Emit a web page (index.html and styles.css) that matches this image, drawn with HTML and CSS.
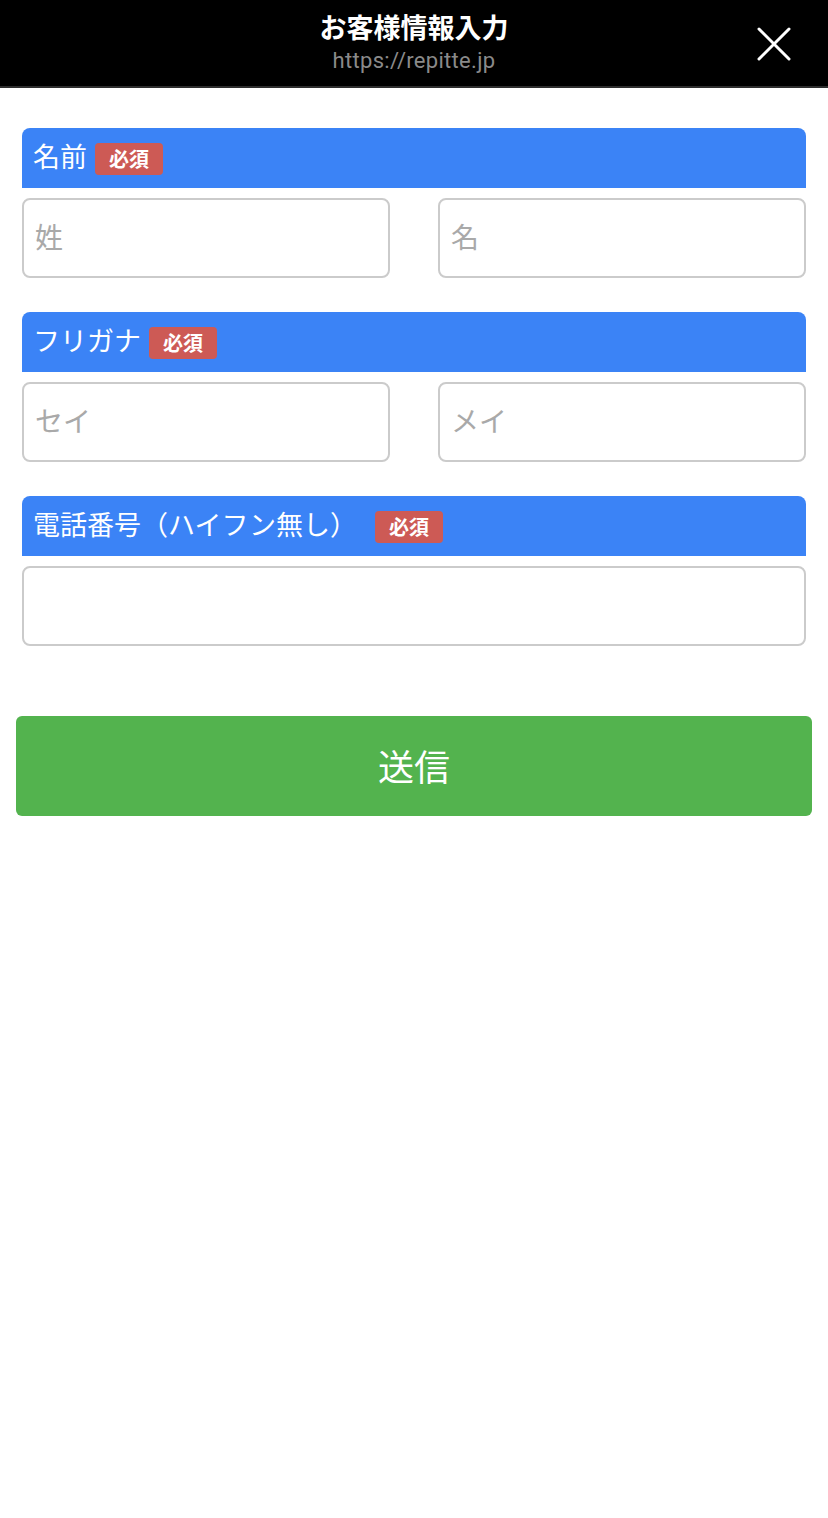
FILE: index.html
```html
<!DOCTYPE html>
<html lang="ja">
<head>
    <meta charset="UTF-8">
    <meta name="viewport" content="width=device-width, initial-scale=1.0">
    <title>お客様情報入力</title>
    <link rel="stylesheet" href="styles.css">
</head>
<body>

    <header class="topbar">
        <div class="topbar-title">お客様情報入力</div>
        <div class="topbar-url">https://repitte.jp</div>
        <button type="button" class="close-btn" aria-label="閉じる">
            <svg width="34" height="34" viewBox="0 0 34 34">
                <path d="M2 2 L32 32 M32 2 L2 32" stroke="#fff" stroke-width="3" stroke-linecap="round" fill="none"/>
            </svg>
        </button>
    </header>

    <main class="form-wrap">
        <form id="customerForm">
            <div class="field">
                <div class="field-label">名前<span class="badge">必須</span></div>
                <div class="field-row">
                    <input type="text" class="text-input" placeholder="姓">
                    <input type="text" class="text-input" placeholder="名">
                </div>
            </div>

            <div class="field">
                <div class="field-label">フリガナ<span class="badge">必須</span></div>
                <div class="field-row">
                    <input type="text" class="text-input" placeholder="セイ">
                    <input type="text" class="text-input" placeholder="メイ">
                </div>
            </div>

            <div class="field">
                <div class="field-label">電話番号（ハイフン無し） <span class="badge wide">必須</span></div>
                <input type="tel" class="text-input full">
            </div>

            <button type="button" class="submit-btn">送信</button>
        </form>
    </main>

</body>
</html>
```

FILE: styles.css
```css
body {
    margin: 0;
    font-family: "Noto Sans CJK JP", "Noto Sans", sans-serif;
    background: #fff;
}
.topbar {
    position: relative;
    height: 86px;
    background: #000;
    border-bottom: 2px solid #2e2e2e;
    text-align: center;
    color: #fff;
}
.topbar-title {
    padding-top: 8px;
    font-size: 27px;
    font-weight: bold;
    line-height: 38px;
}
.topbar-url {
    font-family: Roboto, "Liberation Sans", sans-serif;
    font-size: 22px;
    letter-spacing: 0.3px;
    line-height: 30px;
    color: #8a8a8a;
}
.close-btn {
    position: absolute;
    right: 37px;
    top: 27px;
    padding: 0;
    background: none;
    border: none;
    cursor: pointer;
}
.close-btn svg {
    display: block;
}
.form-wrap {
    padding: 40px 22px 0;
}
.field {
    margin-bottom: 34px;
}
.field-label {
    box-sizing: border-box;
    display: flex;
    align-items: center;
    height: 60px;
    padding: 0 0 5px 11px;
    background: #3b83f6;
    border-radius: 8px 8px 0 0;
    color: #fff;
    font-size: 27px;
    white-space: pre;
}
.badge {
    display: inline-block;
    margin: 6px 0 0 8px;
    padding: 0 14px;
    height: 32px;
    line-height: 32px;
    background: #cd5a55;
    border-radius: 4px;
    font-size: 20px;
    font-weight: bold;
}
.badge.wide {
    margin-left: 12px;
}
.field-row {
    display: grid;
    grid-template-columns: 1fr 1fr;
    gap: 48px;
    margin-top: 10px;
}
.text-input {
    box-sizing: border-box;
    width: 100%;
    height: 80px;
    padding: 0 11px 5px;
    border: 2px solid #cbcbcb;
    border-radius: 8px;
    font-family: inherit;
    font-size: 28px;
    color: #333;
    background: #fff;
}
.text-input::placeholder {
    color: #a9a9a9;
}
.text-input.full {
    display: block;
    margin-top: 10px;
}
.submit-btn {
    display: block;
    width: calc(100% + 12px);
    height: 100px;
    margin: 70px -6px 0;
    padding-bottom: 3px;
    background: #53b34e;
    border: none;
    border-radius: 6px;
    color: #fff;
    font-family: inherit;
    font-size: 36px;
    cursor: pointer;
}
```
